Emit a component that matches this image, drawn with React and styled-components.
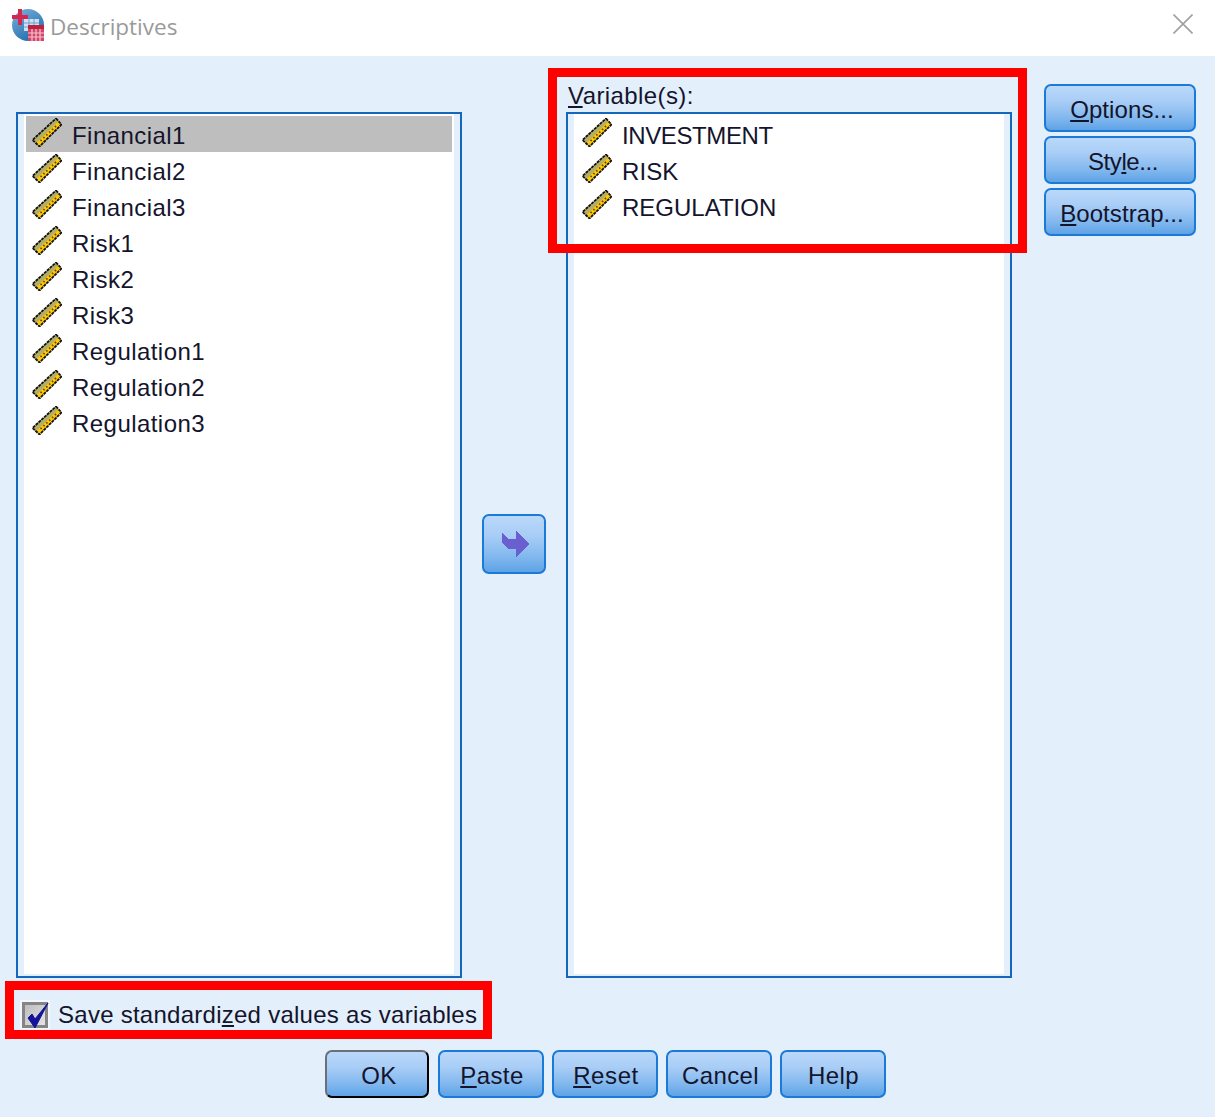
import React from "react";
import styled, { createGlobalStyle } from "styled-components";

const Global = createGlobalStyle`
  html, body { margin: 0; padding: 0; background: #e3effb; }
  * { box-sizing: border-box; }
`;

const Dialog = styled.div`
  position: relative;
  width: 1215px;
  height: 1117px;
  overflow: hidden;
  background: #e3effb;
  color: #14142c;
  font-family: "Liberation Sans", Arial, sans-serif;
  font-size: 24px;
  letter-spacing: 0.4px;
`;

const TitleBar = styled.div`
  display: flex;
  align-items: center;
  height: 56px;
  padding: 0 22px 0 12px;
  background: #fff;
`;

const LogoWrap = styled.svg`
  flex: none;
  margin-top: -6px;
`;

const CloseWrap = styled.svg`
  flex: none;
  margin-top: -8px;
`;

const Title = styled.div`
  flex: 1;
  margin-top: -4px;
  margin-left: 6px;
  color: #9a9a9a;
  font-family: "Open Sans", sans-serif;
  font-size: 22.5px;
  letter-spacing: 0;
`;

const Main = styled.div`
  display: flex;
  height: 894px;
  margin-top: 28px;
  padding-left: 16px;
`;

const Column = styled.div`
  display: flex;
  flex-direction: column;
  width: 446px;
`;

const Label = styled.div`
  height: 28px;
  padding-left: 2px;
  line-height: 23px;
`;

const ListBox = styled.div`
  flex: 1;
  margin-top: ${(p) => (p.$offset ? "28px" : "0")};
  padding: 0 6px 2px;
  background: #e3effb;
  border: 2px solid #1467bd;
`;

const ListInner = styled.div`
  height: 100%;
  padding: 2px;
  background: #fff;
`;

const Row = styled.div`
  display: flex;
  align-items: center;
  height: 36px;
  padding-left: 6px;
  background: ${(p) => (p.$selected ? "#bebebe" : "transparent")};
`;

const RowIcon = styled.svg`
  flex: none;
  width: 30px;
  height: 29px;
  margin-top: -4px;
  margin-right: 10px;
`;

const RowText = styled.span`
  padding-top: 3px;
  line-height: 36px;
  letter-spacing: ${(p) => p.$spacing ?? 0.45}px;
`;

const ArrowColumn = styled.div`
  display: flex;
  align-items: center;
  justify-content: center;
  width: 104px;
  padding: 28px 0 2px;
`;

const Button = styled.div`
  display: flex;
  align-items: center;
  justify-content: center;
  flex: none;
  width: ${(p) => p.$w || 106}px;
  height: ${(p) => p.$h || 48}px;
  margin: ${(p) => (p.$default ? "0 1px" : "0")};
  padding: 4px 0 0 ${(p) => p.$shift || 0}px;
  border: 2px solid #1a7ad6;
  border-color: ${(p) => (p.$default ? "#6b6f76 #000 #000 #6b6f76" : "#1a7ad6")};
  border-radius: 7px;
  background: linear-gradient(#bad8fa, #a8cdf6 35%, #84b9ef 70%, #5fa3e6);
  letter-spacing: ${(p) => p.$spacing ?? 0.4}px;
  white-space: nowrap;
`;

const ArrowButton = styled(Button)`
  padding: 0 0 0 4px;
`;

const SideButtons = styled.div`
  display: flex;
  flex-direction: column;
  gap: 4px;
  margin-left: 32px;
`;

const CheckRow = styled.div`
  display: flex;
  align-items: center;
  height: 30px;
  margin-top: 22px;
  padding-left: 20px;
  letter-spacing: 0.26px;
`;

const CheckBox = styled.div`
  display: flex;
  align-items: center;
  justify-content: center;
  flex: none;
  width: 30px;
  height: 30px;
  margin-right: 8px;
  background: #f4f8fd;
  padding: 2px;
`;

const CheckInner = styled.div`
  position: relative;
  width: 100%;
  height: 100%;
  border: 3px solid #858585;
  background: linear-gradient(135deg, #bdbdbd, #e4e4e4);
`;

const CheckMark = styled.svg`
  position: absolute;
  left: 1px;
  top: -2px;
  width: 24px;
  height: 26px;
`;

const Footer = styled.div`
  display: flex;
  justify-content: center;
  gap: 8px;
  margin-top: 20px;
  padding-right: 5px;
`;

const Highlight = styled.div`
  position: absolute;
  left: ${(p) => p.$x}px;
  top: ${(p) => p.$y}px;
  width: ${(p) => p.$w}px;
  height: ${(p) => p.$h}px;
  border: 9px solid #ff0000;
  pointer-events: none;
`;

const Ruler = () => (
  <RowIcon viewBox="0 0 30 29">
    <polygon points="24,0.5 29.5,6.5 7.5,28.5 0.5,22" fill="#ffc800" />
    <polygon points="24,0.5 26.5,3.5 4,25.5 0.5,22" fill="#b5ae68" />
    <polygon points="24,0.5 29.5,6.5 7.5,28.5 0.5,22" fill="none" stroke="#111" strokeWidth="1.8" strokeDasharray="3 0.8" />
    <line x1="24" y1="8" x2="8" y2="23.5" stroke="#5a4610" strokeWidth="1.8" strokeDasharray="1.5 2.5" />
  </RowIcon>
);

const Logo = () => (
  <LogoWrap width="32" height="32" viewBox="0 0 32 32">
    <defs>
      <linearGradient id="globe" x1="0" y1="0" x2="0.6" y2="1">
        <stop offset="0" stopColor="#7fb2dc" />
        <stop offset="1" stopColor="#1f6fae" />
      </linearGradient>
    </defs>
    <circle cx="16" cy="16" r="16" fill="url(#globe)" />
    <rect x="12" y="10" width="15" height="12" fill="#cfe0f2" />
    <path d="M12 14h15M12 18h15M17 10v12M22 10v12" stroke="#6f9fd0" strokeWidth="1" />
    <rect x="0" y="6" width="16" height="4" fill="#d8244f" />
    <rect x="6" y="0" width="4" height="16" fill="#d8244f" />
    <rect x="16" y="16" width="16" height="16" fill="#d4456a" />
    <rect x="16" y="16" width="16" height="4" fill="#b8233f" />
    <path d="M16 24h16M16 28h16M20 20v12M24 20v12M28 20v12" stroke="#f3c4d0" strokeWidth="1.2" />
  </LogoWrap>
);

const CloseIcon = () => (
  <CloseWrap width="20" height="20" viewBox="0 0 20 20">
    <path d="M0.5 0.5L19.5 19.5M19.5 0.5L0.5 19.5" stroke="#a0a0a0" strokeWidth="1.6" fill="none" />
  </CloseWrap>
);

const MoveArrow = () => (
  <svg width="28" height="26" viewBox="0 0 28 26" shapeRendering="crispEdges">
    <polygon points="28,13 14,0 14,8 6,8 0,2 0,12 6,18 14,18 14,26" fill="#6a5fcf" />
  </svg>
);

const VarRow = ({ name, spacing, selected }) => (
  <Row $selected={selected}>
    <Ruler />
    <RowText $spacing={spacing}>{name}</RowText>
  </Row>
);

const sourceVars = [
  "Financial1",
  "Financial2",
  "Financial3",
  "Risk1",
  "Risk2",
  "Risk3",
  "Regulation1",
  "Regulation2",
  "Regulation3",
];
const chosenVars = [
  { name: "INVESTMENT", spacing: -0.4 },
  { name: "RISK", spacing: 0.1 },
  { name: "REGULATION", spacing: 0 },
];

export default function App() {
  return (
    <Dialog>
      <Global />
      <TitleBar>
        <Logo />
        <Title>Descriptives</Title>
        <CloseIcon />
      </TitleBar>
      <Main>
        <Column>
          <ListBox $offset>
            <ListInner>
              {sourceVars.map((v, i) => (
                <VarRow key={v} name={v} selected={i === 0} />
              ))}
            </ListInner>
          </ListBox>
        </Column>
        <ArrowColumn>
          <ArrowButton $w={64} $h={60}>
            <MoveArrow />
          </ArrowButton>
        </ArrowColumn>
        <Column>
          <Label>
            <u>V</u>ariable(s):
          </Label>
          <ListBox>
            <ListInner>
              {chosenVars.map((v) => (
                <VarRow key={v.name} name={v.name} spacing={v.spacing} />
              ))}
            </ListInner>
          </ListBox>
        </Column>
        <SideButtons>
          <Button $w={152} $spacing={0.1} $shift={4}>
            <u>O</u>ptions...
          </Button>
          <Button $w={152} $spacing={-0.4} $shift={6}>
            Sty<u>l</u>e...
          </Button>
          <Button $w={152} $spacing={0.07} $shift={4}>
            <u>B</u>ootstrap...
          </Button>
        </SideButtons>
      </Main>
      <CheckRow>
        <CheckBox>
          <CheckInner>
            <CheckMark viewBox="0 0 24 26">
              <path d="M2 15L9 25L22 0L9 16L6 11Z" fill="#14149a" stroke="#14149a" strokeWidth="1" />
            </CheckMark>
          </CheckInner>
        </CheckBox>
        <span>
          Save standardi<u>z</u>ed values as variables
        </span>
      </CheckRow>
      <Footer>
        <Button $w={104} $default $shift={4}>
          OK
        </Button>
        <Button $shift={2}>
          <u>P</u>aste
        </Button>
        <Button $shift={2} $spacing={0.6}>
          <u>R</u>eset
        </Button>
        <Button $shift={3}>Cancel</Button>
        <Button $shift={1}>Help</Button>
      </Footer>
      <Highlight $x={548} $y={68} $w={479} $h={185} />
      <Highlight $x={5} $y={981} $w={487} $h={58} />
    </Dialog>
  );
}
